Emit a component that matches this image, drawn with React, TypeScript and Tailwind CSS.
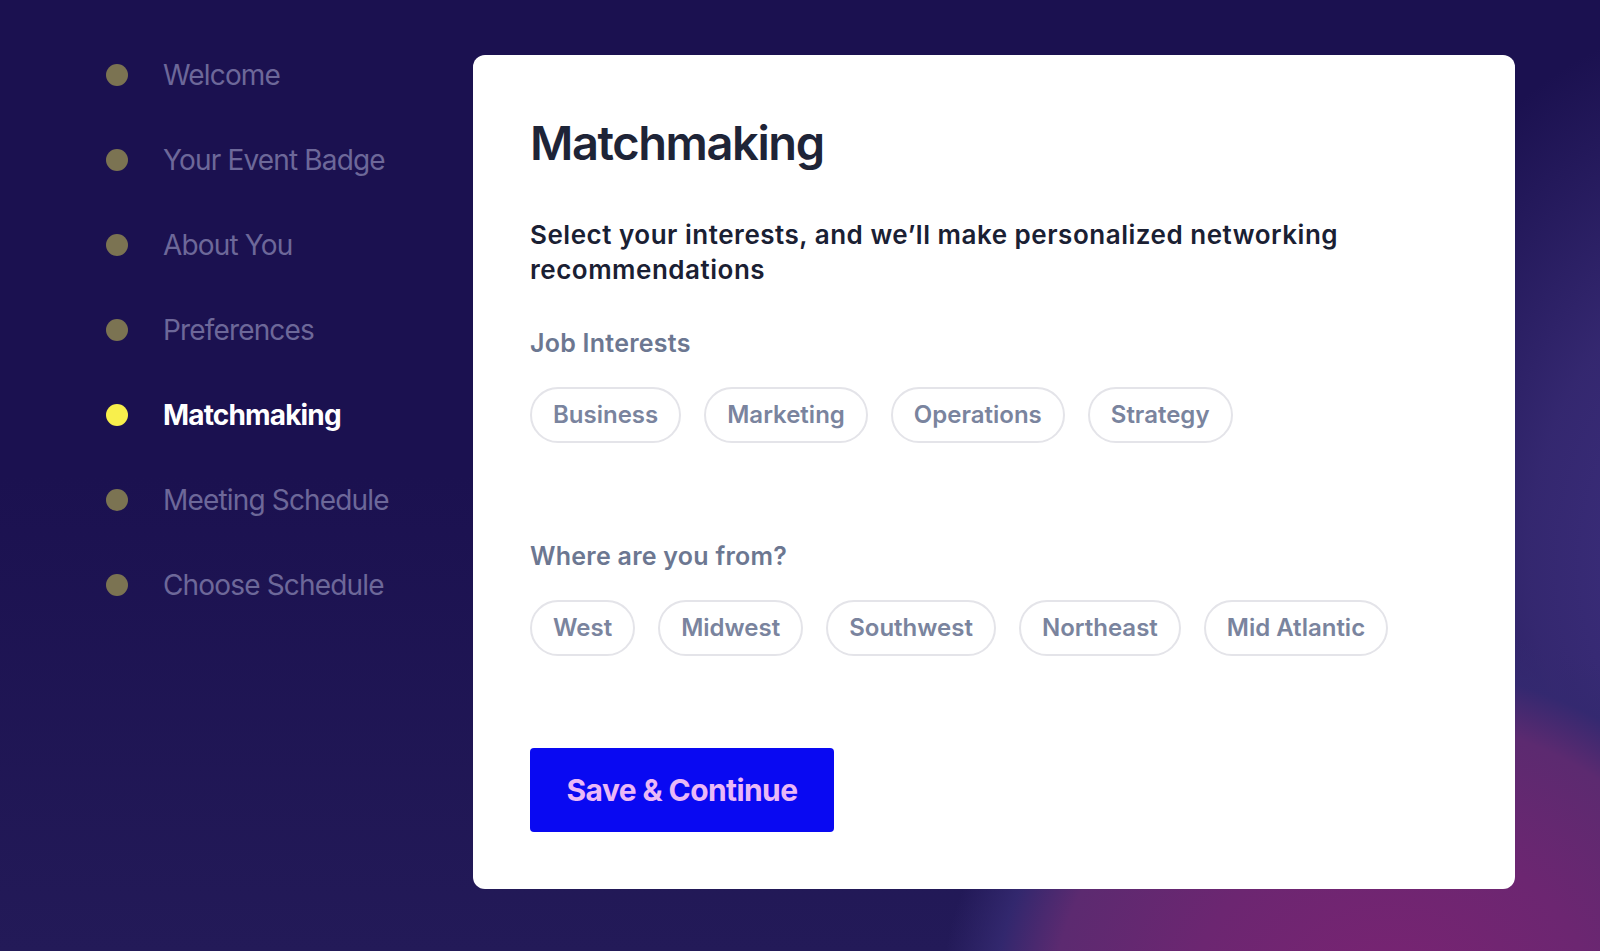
const steps = [
  { label: "Welcome", active: false },
  { label: "Your Event Badge", active: false },
  { label: "About You", active: false },
  { label: "Preferences", active: false },
  { label: "Matchmaking", active: true },
  { label: "Meeting Schedule", active: false },
  { label: "Choose Schedule", active: false },
];

const jobInterests = ["Business", "Marketing", "Operations", "Strategy"];
const regions = ["West", "Midwest", "Southwest", "Northeast", "Mid Atlantic"];

const Chip = ({ label }: { label: string }) => {
  return (
    <button className="h-[56px] px-[21px] rounded-full border-2 border-[#e4e4e9] bg-white flex items-center text-[24px] font-semibold text-[#7a849e]">
      {label}
    </button>
  );
};

const App = () => {
  return (
    <div className="min-h-screen w-full font-['Inter',sans-serif] bg-[#1b1150] bg-[image:radial-gradient(ellipse_450px_390px_at_1390px_1010px,#7a2372_0%,#6c2671_45%,#5c2a70_75%,rgba(52,41,112,0.9)_88%,rgba(40,30,100,0)_100%),radial-gradient(ellipse_380px_540px_at_1720px_560px,rgba(62,48,128,1)_0%,rgba(55,42,115,0.9)_50%,rgba(30,20,85,0)_100%),linear-gradient(180deg,#1b1150_0%,#1b1150_50%,#231a58_100%)]">
      <div className="flex pt-[55px]">
        {/* Steps sidebar */}
        <nav className="w-[473px] shrink-0 pl-[106px]">
          <ul className="flex flex-col gap-[45px]">
            {steps.map((step) => (
              <li key={step.label} className="h-[40px] flex items-center gap-[35px]">
                <span
                  className={
                    step.active
                      ? "w-[22px] h-[22px] rounded-full bg-[#f8ef4c]"
                      : "w-[22px] h-[22px] rounded-full bg-[#7b7352]"
                  }
                ></span>
                <span
                  className={
                    step.active
                      ? "text-[28px] font-bold tracking-[-0.03em] text-white"
                      : "text-[28px] font-normal tracking-[-0.03em] text-[#6d6899]"
                  }
                >
                  {step.label}
                </span>
              </li>
            ))}
          </ul>
        </nav>

        {/* Card */}
        <div className="w-[1042px] bg-white rounded-[12px] px-[57px] pt-[60px] pb-[57px]">
          <h1 className="text-[47px] leading-[56px] font-semibold tracking-[-0.03em] text-[#1e2437]">Matchmaking</h1>

          <p className="mt-[46px] text-[26px] leading-[35px] font-semibold tracking-[0.02em] text-[#1a2033]">
            Select your interests, and we’ll make personalized networking recommendations
          </p>

          <h3 className="mt-[40px] text-[25px] leading-[32px] font-semibold tracking-[0.01em] text-[#6c7791]">Job Interests</h3>
          <div className="mt-[28px] flex flex-wrap gap-[23px]">
            {jobInterests.map((item) => (
              <Chip key={item} label={item} />
            ))}
          </div>

          <h3 className="mt-[97px] text-[25px] leading-[32px] font-semibold tracking-[0.01em] text-[#6c7791]">Where are you from?</h3>
          <div className="mt-[28px] flex flex-wrap gap-[23px]">
            {regions.map((item) => (
              <Chip key={item} label={item} />
            ))}
          </div>

          <button className="mt-[92px] w-[304px] h-[84px] rounded-[4px] bg-[#0909f2] text-[30px] font-bold tracking-[-0.02em] text-[#e9b8f7]">
            Save &amp; Continue
          </button>
        </div>
      </div>
    </div>
  );
};

export default App;
